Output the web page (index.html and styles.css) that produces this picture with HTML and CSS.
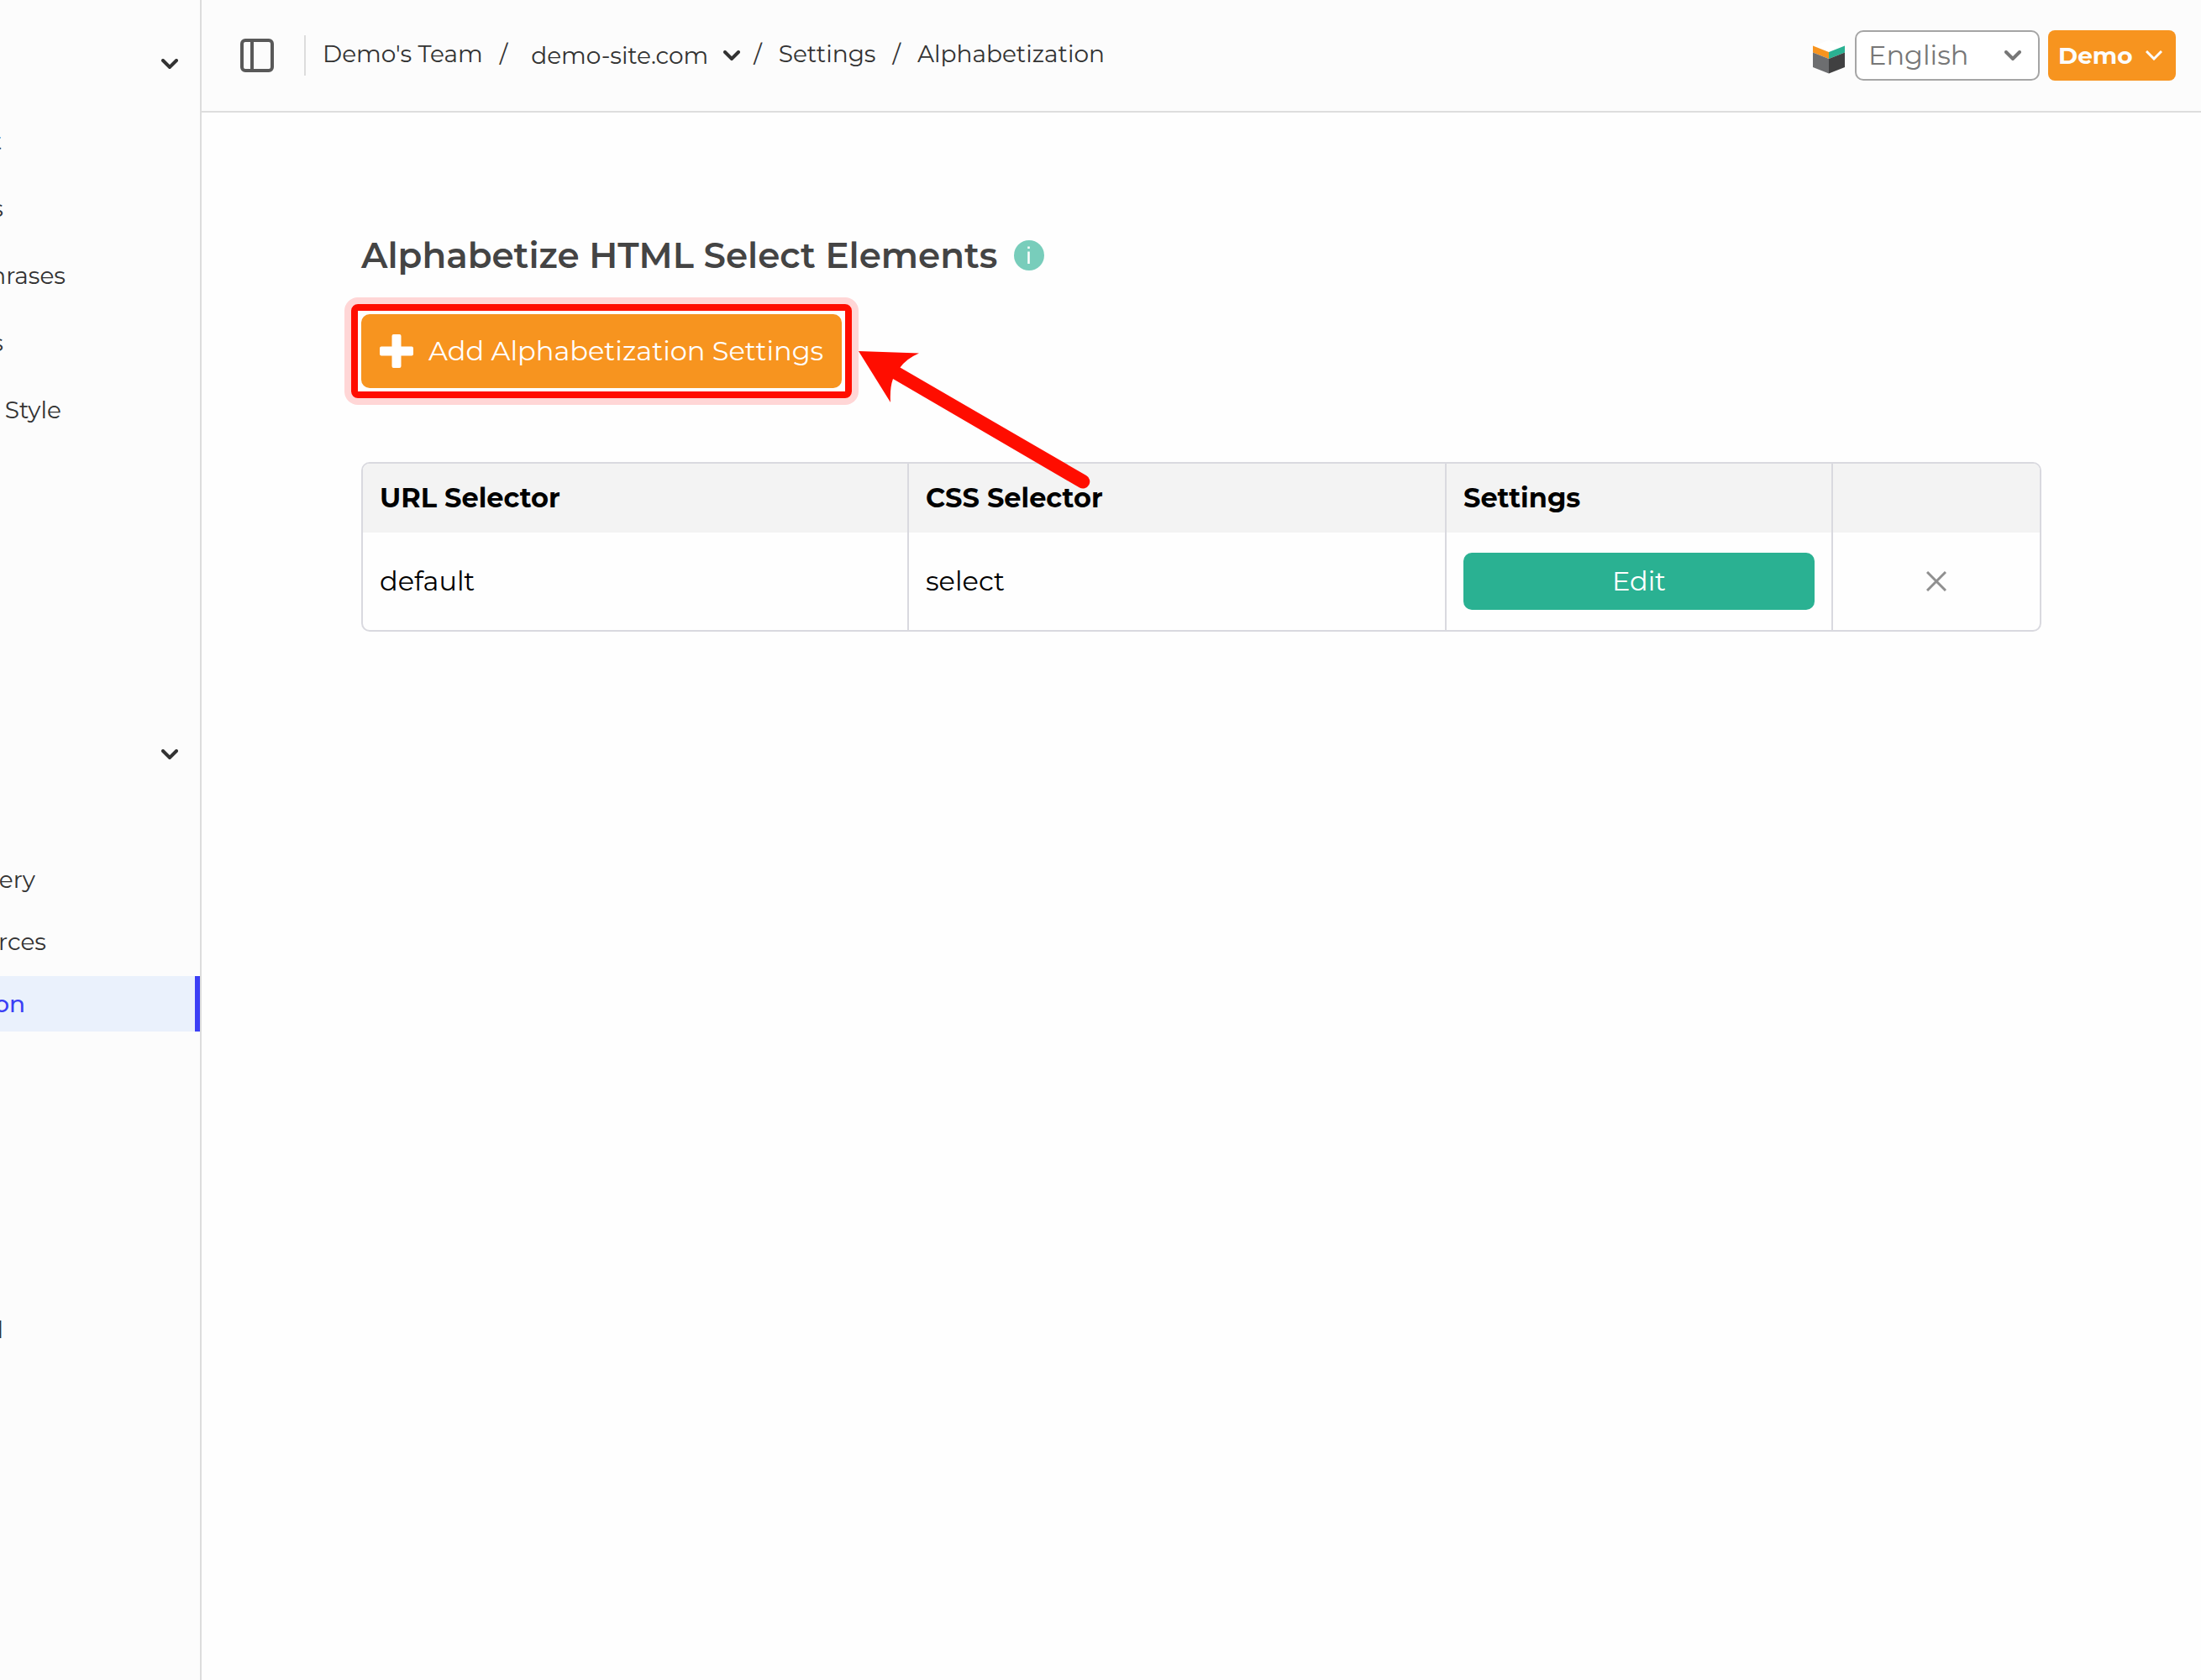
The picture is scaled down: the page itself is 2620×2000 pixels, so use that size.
FILE: index.html
```html
<!DOCTYPE html>
<html lang="en">
<head>
<meta charset="utf-8">
<meta name="viewport" content="width=device-width, initial-scale=1">
<title>Alphabetization</title>
<link rel="stylesheet" href="styles.css">
</head>
<body>
<div class="app">
  <aside class="sidebar">
    <button class="toggle" type="button" aria-label="Collapse section">
      <svg class="chevron heavy" viewBox="0 0 20 12"><path d="M2 2l8 8 8-8"/></svg>
    </button>
    <nav class="nav nav-main">
      <a class="edge" href="#">t</a>
      <a class="narrow" href="#">s</a>
      <a class="wide" href="#">hrases</a>
      <a class="narrow" href="#">s</a>
      <a class="wide short" href="#">Style</a>
    </nav>
    <button class="toggle toggle-settings" type="button" aria-label="Collapse settings">
      <svg class="chevron heavy" viewBox="0 0 20 12"><path d="M2 2l8 8 8-8"/></svg>
    </button>
    <nav class="nav nav-settings">
      <a class="medium" href="#">ery</a>
      <a class="medium long" href="#">rces</a>
      <a class="active" href="#"><span>on</span></a>
    </nav>
    <nav class="nav nav-footer">
      <a class="edge tall" href="#">l</a>
    </nav>
  </aside>
  <div class="page">
    <header class="topbar">
      <button class="panel-button" type="button" aria-label="Toggle sidebar">
        <svg viewBox="0 0 40 40"><rect x="2" y="2" width="36" height="36" rx="4"/><path d="M14 2v36"/></svg>
      </button>
      <nav class="crumbs" aria-label="Breadcrumb">
        <a href="#">Demo's Team</a>
        <span class="slash">/</span>
        <button class="site-button" type="button">demo-site.com
          <svg class="chevron heavy" viewBox="0 0 20 12"><path d="M2 2l8 8 8-8"/></svg>
        </button>
        <span class="slash near">/</span>
        <a href="#">Settings</a>
        <span class="slash">/</span>
        <a href="#">Alphabetization</a>
      </nav>
      <div class="account">
        <svg class="logo" viewBox="0 -4 38 44">
          <path fill="#fff" d="M19 0l19 6.500L19 14 0 6.500z"/>
          <path fill="#f7941f" d="M0 6.500L19 14v8L0 14.500z"/>
          <path fill="#2ab192" d="M38 6.500L19 14v8l19-7.500z"/>
          <path fill="#6d6e70" d="M0 14.500L19 22v17.500L0 32z"/>
          <path fill="#404041" d="M38 14.500L19 22v17.500L38 32z"/>
        </svg>
        <div class="language">
          <select aria-label="Language"><option>English</option></select>
          <svg class="chevron heavy" viewBox="0 0 20 12"><path d="M2 2l8 8 8-8"/></svg>
        </div>
        <button class="user-button" type="button">Demo
          <svg class="chevron square" viewBox="0 0 20 12"><path d="M1 1l9 9 9-9"/></svg>
        </button>
      </div>
    </header>
    <main class="content">
      <div class="title-row">
        <h1>Alphabetize HTML Select Elements</h1>
        <span class="info" aria-label="Information">
          <svg viewBox="0 0 36 36"><circle cx="18" cy="18" r="18" fill="#78cdbb"/><path d="M17.500 13.500V28M17.500 7.500v2.500" stroke="#fff" stroke-width="2.500"/></svg>
        </span>
      </div>
      <div class="action">
        <button class="add-button" type="button">
          <svg viewBox="0 0 40 40"><path fill="#fff" d="M16.500 0h7q2 0 2 2v12.500H38q2 0 2 2v7q0 2-2 2H25.500V38q0 2-2 2h-7q-2 0-2-2V25.500H2q-2 0-2-2v-7q0-2 2-2h12.500V2q0-2 2-2z"/></svg>
          Add Alphabetization Settings
        </button>
        <svg class="arrow" viewBox="0 0 280 168"><path fill="#ff0d00" d="M0 2L72 4.500Q57 11 49.500 21.500L271 150A8 8 0 0 1 263 164.500L41 35Q37 46 38 63z"/></svg>
      </div>
      <table class="rules">
        <thead>
          <tr><th class="col-url">URL Selector</th><th class="col-css">CSS Selector</th><th class="col-settings">Settings</th><th></th></tr>
        </thead>
        <tbody>
          <tr>
            <td>default</td>
            <td>select</td>
            <td><button class="edit-button" type="button">Edit</button></td>
            <td><button class="remove-button" type="button" aria-label="Remove"><svg viewBox="0 0 24 24"><path d="M1 1l22 22M23 1L1 23"/></svg></button></td>
          </tr>
        </tbody>
      </table>
    </main>
  </div>
</div>
</body>
</html>
```
FILE: styles.css
```css
* {
  box-sizing: border-box;
}

body {
  margin: 0;
  background: #fefefe;
  color: #333;
  font-family: Montserrat, Inter, sans-serif;
  font-size: 28px;
  line-height: 40px;
}

button,
select {
  margin: 0;
  padding: 0;
  border: 0;
  background: none;
  color: inherit;
  font: inherit;
}

a {
  color: inherit;
  text-decoration: none;
}

svg {
  display: block;
  flex: none;
}

.app {
  display: flex;
  min-height: 100vh;
}

.chevron {
  width: 20px;
  height: 12px;
  fill: none;
  stroke: currentColor;
  stroke-width: 3;
  stroke-linecap: round;
}

.chevron.heavy {
  stroke-width: 4;
}

.chevron.square {
  stroke-linecap: butt;
}

/* Sidebar */

.sidebar {
  flex: none;
  width: 240px;
  padding-top: 46px;
  border-right: 2px solid #ddd;
  background: #fcfcfc;
  overflow: hidden;
}

.toggle {
  display: flex;
  align-items: center;
  justify-content: flex-end;
  width: 100%;
  height: 60px;
  padding-right: 26px;
}

.toggle-settings {
  margin-top: 340px;
}

.nav {
  display: flex;
  flex-direction: column;
}

.nav a {
  display: flex;
  align-items: center;
  justify-content: flex-end;
  height: 66px;
  overflow: hidden;
}

.nav-main {
  margin-top: 22px;
}

.nav-main a {
  height: 80px;
}

.nav-settings {
  gap: 8px;
  margin-top: 86px;
}

.nav-footer {
  margin-top: 322px;
}

.nav .edge {
  width: 2px;
}

.nav .tall {
  width: 4px;
}

.nav .narrow {
  width: 4px;
}

.nav .medium {
  width: 42px;
}

.nav .long {
  width: 55px;
}

.nav .wide {
  width: 78px;
}

.nav .short {
  width: 73px;
}

.nav .active {
  justify-content: flex-start;
  border-right: 6px solid #3b3ff5;
  background: #eaf1fc;
  color: #3b3ff5;
  font-weight: 500;
}

.active span {
  display: flex;
  justify-content: flex-end;
  width: 30px;
}

/* Top bar */

.page {
  flex: 1;
  min-width: 0;
}

.topbar {
  display: flex;
  align-items: center;
  height: 134px;
  padding: 0 30px 0 46px;
  border-bottom: 2px solid #ddd;
  background: #fcfcfc;
}

.panel-button svg {
  width: 40px;
  height: 40px;
  fill: none;
  stroke: #595959;
  stroke-width: 4;
}

.crumbs {
  display: flex;
  align-items: center;
  height: 48px;
  margin-left: 36px;
  padding-left: 20px;
  border-left: 2px solid #ddd;
}

.crumbs a,
.slash {
  padding-bottom: 4px;
}

.slash {
  margin: 0 20px;
}

.slash.near {
  margin-left: 16px;
}

.site-button {
  display: flex;
  align-items: center;
  gap: 18px;
  margin-left: 8px;
}

.account {
  display: flex;
  align-items: center;
  margin-left: auto;
}

.logo {
  width: 38px;
  height: 44px;
  margin-right: 12px;
}

.language {
  display: grid;
  align-items: center;
  width: 220px;
  height: 60px;
  margin-right: 10px;
  border: 2px solid #a5a5a5;
  border-radius: 10px;
  background: #fff;
  color: #777;
}

.language select {
  grid-area: 1 / 1;
  width: 100%;
  height: 56px;
  padding-left: 14px;
  appearance: none;
  font-size: 32px;
}

.language .chevron {
  grid-area: 1 / 1;
  justify-self: end;
  margin-right: 20px;
  pointer-events: none;
}

.user-button {
  display: flex;
  align-items: center;
  justify-content: space-between;
  width: 152px;
  height: 60px;
  padding: 0 16px 0 12px;
  border-radius: 8px;
  background: #f7941f;
  color: #fcfcfc;
  font-weight: 700;
}

/* Content */

.content {
  padding: 140px 190px;
}

.title-row {
  display: flex;
  align-items: center;
  gap: 20px;
  height: 60px;
}

h1 {
  margin: 0;
  color: #444;
  font-size: 42px;
  font-weight: 600;
  line-height: 60px;
}

.info svg {
  width: 36px;
  height: 36px;
}

.action {
  display: flex;
  position: relative;
  margin-top: 40px;
}

.add-button {
  display: flex;
  position: relative;
  align-items: center;
  gap: 18px;
  height: 88px;
  padding: 0 22px;
  border-radius: 10px;
  background: #f7941f;
  color: #fff;
  font-size: 32px;
}

/* Highlight frame around the button */
.add-button::before {
  content: "";
  position: absolute;
  inset: -12px;
  border: 8px solid #ff0d00;
  border-radius: 8px;
  box-shadow: 0 0 0 8px #ffd6d6;
}

.add-button svg {
  width: 40px;
  height: 40px;
}

.arrow {
  position: absolute;
  top: 42px;
  left: 592px;
  width: 280px;
  height: 168px;
}

.rules {
  width: 100%;
  margin-top: 88px;
  border: 2px solid #d9d9df;
  border-radius: 10px;
  border-spacing: 0;
  table-layout: fixed;
  overflow: hidden;
  color: #000;
  font-size: 32px;
}

.rules th,
.rules td {
  padding: 0 20px;
  border-right: 2px solid #d9d9df;
  text-align: left;
}

.rules th:last-child,
.rules td:last-child {
  border-right: 0;
}

.rules th {
  height: 82px;
  background: #f3f3f3;
  font-weight: 700;
}

.rules td {
  height: 116px;
}

.col-url {
  width: 650px;
}

.col-css {
  width: 640px;
}

.col-settings {
  width: 460px;
}

.edit-button {
  display: block;
  width: 100%;
  height: 68px;
  border-radius: 10px;
  background: #2ab192;
  color: #fff;
}

.remove-button {
  display: block;
  margin: 0 auto;
}

.remove-button svg {
  width: 24px;
  height: 24px;
  fill: none;
  stroke: #8f8f8f;
  stroke-width: 3;
}
```
